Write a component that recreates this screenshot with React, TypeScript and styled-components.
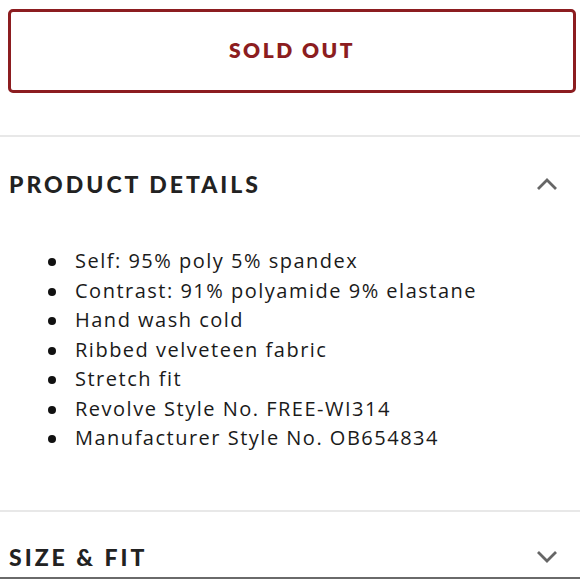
import React from "react";
import styled, { createGlobalStyle } from "styled-components";

const GlobalStyle = createGlobalStyle`
  html, body {
    margin: 0;
    padding: 0;
    background: #ffffff;
  }
  body {
    font-family: Lato, "Open Sans", Arial, sans-serif;
    color: #1a1a1a;
  }
`;

const Page = styled.div`
  width: 580px;
  height: 580px;
  overflow: hidden;
  background: #fff;
`;

const ButtonWrap = styled.div`
  padding: 9px 4px 0 8px;
  height: 137px;
  box-sizing: border-box;
  border-bottom: 2px solid #e8e8e8;
`;

const SoldOutButton = styled.button`
  width: 100%;
  height: 84px;
  box-sizing: border-box;
  padding: 0 0 3px;
  border: 3px solid #8c1d20;
  border-radius: 5px;
  background: #fff;
  color: #8c1d20;
  font-family: Lato, Arial, sans-serif;
  font-weight: 800;
  font-size: 21px;
  letter-spacing: 2.5px;
  cursor: default;
`;

const Section = styled.section`
  border-bottom: 2px solid #e8e8e8;
  padding-bottom: 57px;
`;

const Header = styled.div`
  display: flex;
  align-items: center;
  justify-content: space-between;
  padding: 0 22px 0 9px;
  height: 94px;
`;

const Title = styled.h2`
  margin: 0;
  font-family: Lato, Arial, sans-serif;
  font-weight: 900;
  font-size: 23px;
  letter-spacing: 3px;
  color: #222;
`;

const Chevron = styled.svg`
  width: 22px;
  height: 14px;
  color: #666;
`;

const List = styled.ul`
  margin: 0;
  padding: 15px 0 0 75px;
  list-style: none;
`;

const Item = styled.li`
  position: relative;
  font-family: "Open Sans", Arial, sans-serif;
  font-size: 20px;
  line-height: 29.5px;
  letter-spacing: 1.5px;
  color: #1a1a1a;

  &::before {
    content: "";
    position: absolute;
    left: -27px;
    top: 12px;
    width: 8px;
    height: 8px;
    border-radius: 50%;
    background: #111;
  }
`;

const Closed = styled.div`
  height: 67px;
  border-bottom: 2px solid #6a6a6a;
  display: flex;
  align-items: center;
  justify-content: space-between;
  padding: 26px 22px 0 9px;
  box-sizing: border-box;
`;

const details = [
  "Self: 95% poly 5% spandex",
  "Contrast: 91% polyamide 9% elastane",
  "Hand wash cold",
  "Ribbed velveteen fabric",
  "Stretch fit",
  "Revolve Style No. FREE-WI314",
  "Manufacturer Style No. OB654834",
];

const ChevronIcon = ({ up }: { up?: boolean }) => (
  <Chevron viewBox="0 0 22 14">
    <polyline
      points={up ? "2,12 11,3 20,12" : "2,2 11,11 20,2"}
      fill="none"
      stroke="currentColor"
      strokeWidth="2.8"
    />
  </Chevron>
);

export default function App() {
  return (
    <Page>
      <GlobalStyle />
      <ButtonWrap>
        <SoldOutButton>SOLD OUT</SoldOutButton>
      </ButtonWrap>
      <Section>
        <Header>
          <Title>PRODUCT DETAILS</Title>
          <ChevronIcon up />
        </Header>
        <List>
          {details.map((d) => (
            <Item key={d}>{d}</Item>
          ))}
        </List>
      </Section>
      <Closed>
        <Title>SIZE &amp; FIT</Title>
        <ChevronIcon />
      </Closed>
    </Page>
  );
}
